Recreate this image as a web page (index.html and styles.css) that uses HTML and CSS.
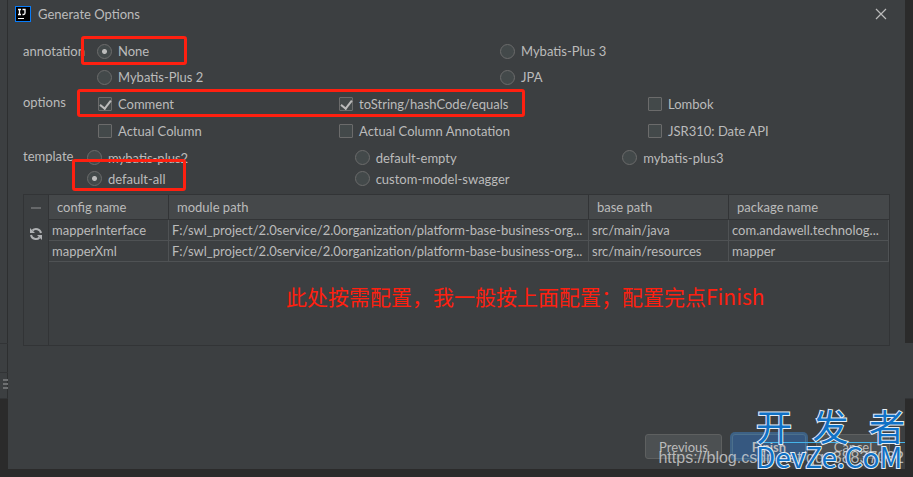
FILE: index.html
```html
<!DOCTYPE html>
<html lang="en">
<head>
  <meta charset="utf-8">
  <title>Generate Options</title>
  <link rel="stylesheet" href="styles.css">
</head>
<body>
  <div class="editor-left">
    <svg width="5" height="11" viewBox="0 0 5 11"><path d="M0 1h5M0 5h5M0 9h5" stroke="#6e7072" stroke-width="2"/></svg>
  </div>
  <div class="editor-right"></div>
  <main class="dialog">
    <header class="title-bar">
      <svg class="logo" width="16" height="16" viewBox="0 0 16 16">
        <rect width="16" height="16" fill="#087cfa"/>
        <rect x="1" y="1" width="14" height="14" fill="#000"/>
        <path d="M3 3.500h3M4.500 3.500v5M3 8.500h3M7.500 3.500h2.500v3.500q0 1.500-1.500 1.500h-1" fill="none" stroke="#fff" stroke-width="1.300"/>
        <path d="M3 12.500h6" stroke="#fff"/>
      </svg>
      <h1>Generate Options</h1>
      <button class="close" aria-label="Close">
        <svg width="12" height="12" viewBox="0 0 12 12"><path d="M1 1l10 10M11 1L1 11" stroke="#bbb" stroke-width="1.200"/></svg>
      </button>
    </header>

    <section class="group annotation" role="group" aria-labelledby="annotationLabel">
      <span class="group-label" id="annotationLabel">annotation</span>
      <div class="choices">
        <label><input type="radio" name="annotation" checked>None</label>
        <label><input type="radio" name="annotation">Mybatis-Plus 3</label>
        <label><input type="radio" name="annotation">Mybatis-Plus 2</label>
        <label><input type="radio" name="annotation">JPA</label>
      </div>
      <div class="mark mark-none"></div>
    </section>

    <section class="group options" role="group" aria-labelledby="optionsLabel">
      <span class="group-label" id="optionsLabel">options</span>
      <div class="choices">
        <label><input type="checkbox" checked>Comment</label>
        <label><input type="checkbox" checked>toString/hashCode/equals</label>
        <label><input type="checkbox">Lombok</label>
        <label><input type="checkbox">Actual Column</label>
        <label><input type="checkbox">Actual Column Annotation</label>
        <label><input type="checkbox">JSR310: Date API</label>
      </div>
      <div class="mark mark-comment"></div>
    </section>

    <section class="group template" role="group" aria-labelledby="templateLabel">
      <span class="group-label" id="templateLabel">template</span>
      <div class="choices">
        <label><input type="radio" name="template">mybatis-plus2</label>
        <label><input type="radio" name="template">default-empty</label>
        <label><input type="radio" name="template">mybatis-plus3</label>
        <label><input type="radio" name="template" checked>default-all</label>
        <label><input type="radio" name="template">custom-model-swagger</label>
      </div>
      <div class="mark mark-default"></div>
    </section>

    <section class="config">
      <div class="toolbar">
        <button aria-label="Remove"><svg width="12" height="12" viewBox="0 0 12 12"><path d="M1 6h10" stroke="#66686a" stroke-width="2"/></svg></button>
        <button aria-label="Refresh">
          <svg width="14" height="14" viewBox="0 0 14 14">
            <path d="M12 6A5 5 0 0 0 3.500 3.500M2 8A5 5 0 0 0 10.500 10.500" fill="none" stroke="#afb1b3" stroke-width="2"/>
            <path d="M1 1v5h5zM13 13V8H8z" fill="#afb1b3"/>
          </svg>
        </button>
      </div>
      <div class="table-area">
        <table>
          <thead>
            <tr><th class="name">config name</th><th class="module">module path</th><th class="base">base path</th><th class="package">package name</th></tr>
          </thead>
          <tbody>
            <tr>
              <td>mapperInterface</td>
              <td>F:/swl_project/2.0service/2.0organization/platform-base-business-org...</td>
              <td>src/main/java</td>
              <td>com.andawell.technolog...</td>
            </tr>
            <tr>
              <td>mapperXml</td>
              <td>F:/swl_project/2.0service/2.0organization/platform-base-business-org...</td>
              <td>src/main/resources</td>
              <td>mapper</td>
            </tr>
          </tbody>
        </table>
        <p class="note" lang="zh">此处按需配置，我一般按上面配置；配置完点Finish</p>
      </div>
    </section>

    <footer class="buttons">
      <button>Previous</button>
      <button class="primary">Finish</button>
      <button>Cancel</button>
    </footer>
  </main>
  <div class="blog-url">https://blog.csdn.net/qq_38837032</div>
  <div class="stamp">
    <div class="stamp-top" lang="zh"><span>开</span><span>发</span><span>者</span></div>
    <div class="stamp-bottom">DevZe.CoM</div>
  </div>
</body>
</html>
```
FILE: styles.css
```css
:root {
  --bg: #3c3f41;
  --backdrop: #2b2b2b;
  --text: #bbbbbb;
  --line: #323436;
  --grid: #4f5254;
  --control: #43494a;
  --control-border: #6b6b6b;
  --mark: #ff2010;
}
* {
  box-sizing: border-box;
  margin: 0;
  padding: 0;
}
body {
  position: relative;
  min-height: 100vh;
  padding: 0 8px 8px;
  display: flex;
  background: var(--backdrop);
  color: var(--text);
  font: 13px/20px Lato, "Noto Sans CJK SC", sans-serif;
  overflow: hidden;
}
button {
  font: inherit;
  color: inherit;
  background: none;
  border: none;
}
svg {
  display: block;
}

/* editor window showing behind the dialog */
.editor-left,
.editor-right {
  position: absolute;
  background: var(--bg);
  border-bottom: 1px solid var(--line);
}
.editor-left {
  left: 0;
  top: 0;
  width: 8px;
  height: 399px;
  border-right: 1px solid #2d2f30;
}
.editor-left svg {
  position: absolute;
  left: 3px;
  bottom: 8px;
}
.editor-left::before {
  content: '';
  position: absolute;
  top: 343px;
  width: 8px;
  height: 28px;
  border: solid var(--line);
  border-width: 1px 0;
}
.editor-right {
  right: 0;
  top: 343px;
  width: 8px;
  height: 56px;
}

.dialog {
  position: relative;
  flex: 1;
  display: flex;
  flex-direction: column;
  padding: 0 15px 10px;
  background: var(--bg);
}
.title-bar {
  display: flex;
  align-items: center;
  height: 28px;
  margin: 0 0 10px -8px;
}
.title-bar h1 {
  flex: 1;
  margin-left: 7px;
  font-size: 13px;
  font-weight: 400;
}
.close {
  padding: 3px;
}

.group {
  position: relative;
  display: flex;
}
.group-label {
  width: 74px;
  line-height: 26px;
}
.choices {
  flex: 1;
  display: grid;
}
.choices label {
  display: flex;
  align-items: center;
  gap: 6px;
  white-space: nowrap;
}
.annotation .choices {
  grid-template-columns: 1fr 1fr;
  grid-auto-rows: 26px;
  column-gap: 13px;
}
.options .choices {
  grid-template-columns: 241fr 309fr 242fr;
  grid-auto-rows: 27px;
  padding-left: 1px;
}
.options .group-label {
  line-height: 24px;
}
.template .group-label {
  width: 64px;
  line-height: 24px;
}
.template .choices {
  grid-template-columns: repeat(3, 1fr);
  grid-auto-rows: 21px;
  padding-top: 3px;
}
input {
  appearance: none;
  background: var(--control);
  border: 1px solid var(--control-border);
}
input[type="radio"] {
  width: 15px;
  height: 15px;
  border-radius: 50%;
}
input[type="radio"]:checked {
  background: radial-gradient(circle, #bbb 0 2px, transparent 3px) var(--control);
}
input[type="checkbox"] {
  width: 14px;
  height: 14px;
  border-radius: 1px;
}
input[type="checkbox"]:checked::before {
  content: '';
  display: block;
  width: 5px;
  height: 9px;
  margin: 0 auto;
  border: solid #bbb;
  border-width: 0 2px 2px 0;
  transform: rotate(38deg);
}

/* red frames drawn round the picked choices */
.mark {
  position: absolute;
  border: 3px solid var(--mark);
  border-radius: 3px;
  pointer-events: none;
}
.mark-none {
  left: 58px;
  top: -2px;
  width: 106px;
  height: 29px;
}
.mark-comment {
  left: 54px;
  top: -1px;
  width: 448px;
  height: 28px;
}
.mark-default {
  left: 49px;
  top: 15px;
  width: 114px;
  height: 32px;
}

.config {
  display: flex;
  height: 152px;
  margin-top: 5px;
  border: 1px solid var(--line);
}
.toolbar {
  display: flex;
  flex-direction: column;
  align-items: center;
  gap: 13px;
  width: 25px;
  padding-top: 7px;
  border-right: 1px solid var(--line);
}
.table-area {
  flex: 1;
}
table {
  width: 100%;
  border-spacing: 0;
  table-layout: fixed;
}
th,
td {
  overflow: hidden;
  white-space: nowrap;
  text-align: left;
  font-weight: 400;
}
th {
  height: 25px;
  padding-left: 8px;
  background: #45484a;
  border-right: 1px solid var(--line);
  border-bottom: 1px solid var(--line);
}
th:last-child {
  border-right: none;
}
td {
  height: 21px;
  padding-left: 3px;
  border-right: 1px solid var(--grid);
  border-bottom: 1px solid var(--grid);
}
.name {
  width: 120px;
}
.base {
  width: 140px;
}
.package {
  width: 160px;
}
.note {
  margin-top: 18px;
  padding-left: 237px;
  color: var(--mark);
  font: 21px/32px "Noto Sans CJK SC", sans-serif;
  white-space: nowrap;
}

.buttons {
  display: flex;
  justify-content: flex-end;
  gap: 10px;
  margin-top: auto;
}
.buttons button {
  min-width: 74px;
  height: 25px;
  padding: 0 13px;
  background: #4c5052;
  border: 1px solid #5e6060;
  border-radius: 3px;
}
.buttons .primary {
  background: #365880;
  border-color: #4c708c;
  box-shadow: 0 0 0 2px #3d6185;
  font-weight: 700;
}

.blog-url {
  position: absolute;
  right: 9px;
  bottom: 8px;
  color: rgba(220, 220, 220, 0.75);
  font: 16px/22px "Liberation Sans", sans-serif;
}
.stamp {
  position: absolute;
  right: 8px;
  bottom: 8px;
  width: 149px;
  color: #1072c6;
  font: 28px/26px "Noto Sans CJK SC", sans-serif;
  -webkit-text-stroke: 2px #e6eef6;
  paint-order: stroke fill;
}
.stamp-top {
  display: flex;
  justify-content: space-between;
  padding-bottom: 4px;
  font-size: 36px;
  border-bottom: 1px solid #45b4ea;
}
```
